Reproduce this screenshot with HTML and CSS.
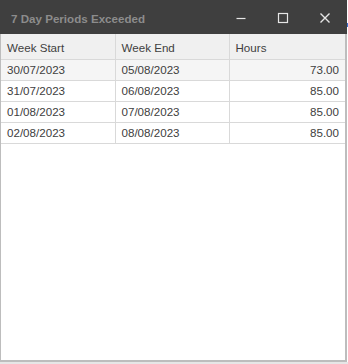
FILE: index.html
```html
<!DOCTYPE html>
<html lang="en">
<head>
    <meta charset="UTF-8">
    <title>7 Day Periods Exceeded</title>
    <link rel="stylesheet" href="styles.css">
</head>
<body>
    <div class="page">
        <div class="window">
            <div class="titleBar">
                <span class="titleText">7 Day Periods Exceeded</span>
                <div class="titleButtons">
                    <svg class="btnIcon" width="12" height="12" viewBox="0 0 12 12"><path d="M1.5 6.5h9" stroke="#e6e6e6" stroke-width="1.2" fill="none"/></svg>
                    <svg class="btnIcon" width="12" height="12" viewBox="0 0 12 12"><rect x="1.5" y="1.5" width="9" height="9" stroke="#e6e6e6" stroke-width="1.2" fill="none"/></svg>
                    <svg class="btnIcon" width="12" height="12" viewBox="0 0 12 12"><path d="M1.5 1.5l9 9M10.5 1.5l-9 9" stroke="#e6e6e6" stroke-width="1.4" fill="none"/></svg>
                </div>
            </div>
            <div class="gridArea">
                <table class="grid">
                    <thead>
                        <tr>
                            <th>Week Start</th>
                            <th>Week End</th>
                            <th>Hours</th>
                        </tr>
                    </thead>
                    <tbody>
                        <tr class="focused">
                            <td>30/07/2023</td>
                            <td>05/08/2023</td>
                            <td class="num">73.00</td>
                        </tr>
                        <tr>
                            <td>31/07/2023</td>
                            <td>06/08/2023</td>
                            <td class="num">85.00</td>
                        </tr>
                        <tr>
                            <td>01/08/2023</td>
                            <td>07/08/2023</td>
                            <td class="num">85.00</td>
                        </tr>
                        <tr>
                            <td>02/08/2023</td>
                            <td>08/08/2023</td>
                            <td class="num">85.00</td>
                        </tr>
                    </tbody>
                </table>
            </div>
        </div>
        <div class="sideStrip">
            <span class="sideLink"></span>
        </div>
    </div>
    <div class="bottomStrip"></div>
</body>
</html>
```

FILE: styles.css
```css
* {
    box-sizing: border-box;
    font-family: "Liberation Sans", Arial, sans-serif;
}
body {
    margin: 0;
    background: #ffffff;
    width: 348px;
    height: 364px;
    overflow: hidden;
}
.page {
    display: flex;
    height: 362px;
}
.window {
    width: 347px;
    height: 362px;
    display: flex;
    flex-direction: column;
    background: #ffffff;
    border-left: 1px solid #bdbdbd;
    border-right: 2px solid #bdbdbd;
    border-bottom: 2px solid #bdbdbd;
}
.titleBar {
    height: 34px;
    flex: none;
    background: #3f3f3f;
    display: flex;
    align-items: center;
    justify-content: space-between;
    margin-left: -1px;
    margin-right: -2px;
    padding-left: 11px;
}
.titleText {
    color: #8c8c8c;
    font-weight: bold;
    font-size: 11.6px;
    padding-top: 3px;
}
.titleButtons {
    display: flex;
    align-items: center;
    gap: 30px;
    padding-right: 16px;
    padding-top: 2px;
}
.btnIcon {
    display: block;
}
.gridArea {
    flex: 1;
    background: #ffffff;
}
.grid {
    width: 100%;
    border-collapse: collapse;
    table-layout: fixed;
}
.grid th,
.grid td {
    border-right: 1px solid #d9d9d9;
    border-bottom: 1px solid #d9d9d9;
    font-size: 11.6px;
    font-weight: normal;
    color: #404040;
    text-align: left;
    white-space: nowrap;
    padding: 0 6px;
}
.grid th:last-child,
.grid td:last-child {
    border-right: none;
}
.grid th {
    height: 25px;
    background: #f0f0f0;
    padding-top: 2px;
}
.grid th:nth-child(1),
.grid td:nth-child(1) {
    width: 114px;
}
.grid th:nth-child(2),
.grid td:nth-child(2) {
    width: 114px;
}
.grid td {
    height: 21px;
}
.grid .num {
    text-align: right;
    padding-right: 6px;
}
.grid .focused td {
    background: #f5f5f5;
}
.sideStrip {
    flex: 1;
    background: #ffffff;
    position: relative;
}
.sideLink {
    position: absolute;
    top: 23px;
    left: 0;
    width: 1px;
    height: 4px;
    background: #3b6fd1;
}
.bottomStrip {
    height: 2px;
    background: #e6e6e6;
}
```
